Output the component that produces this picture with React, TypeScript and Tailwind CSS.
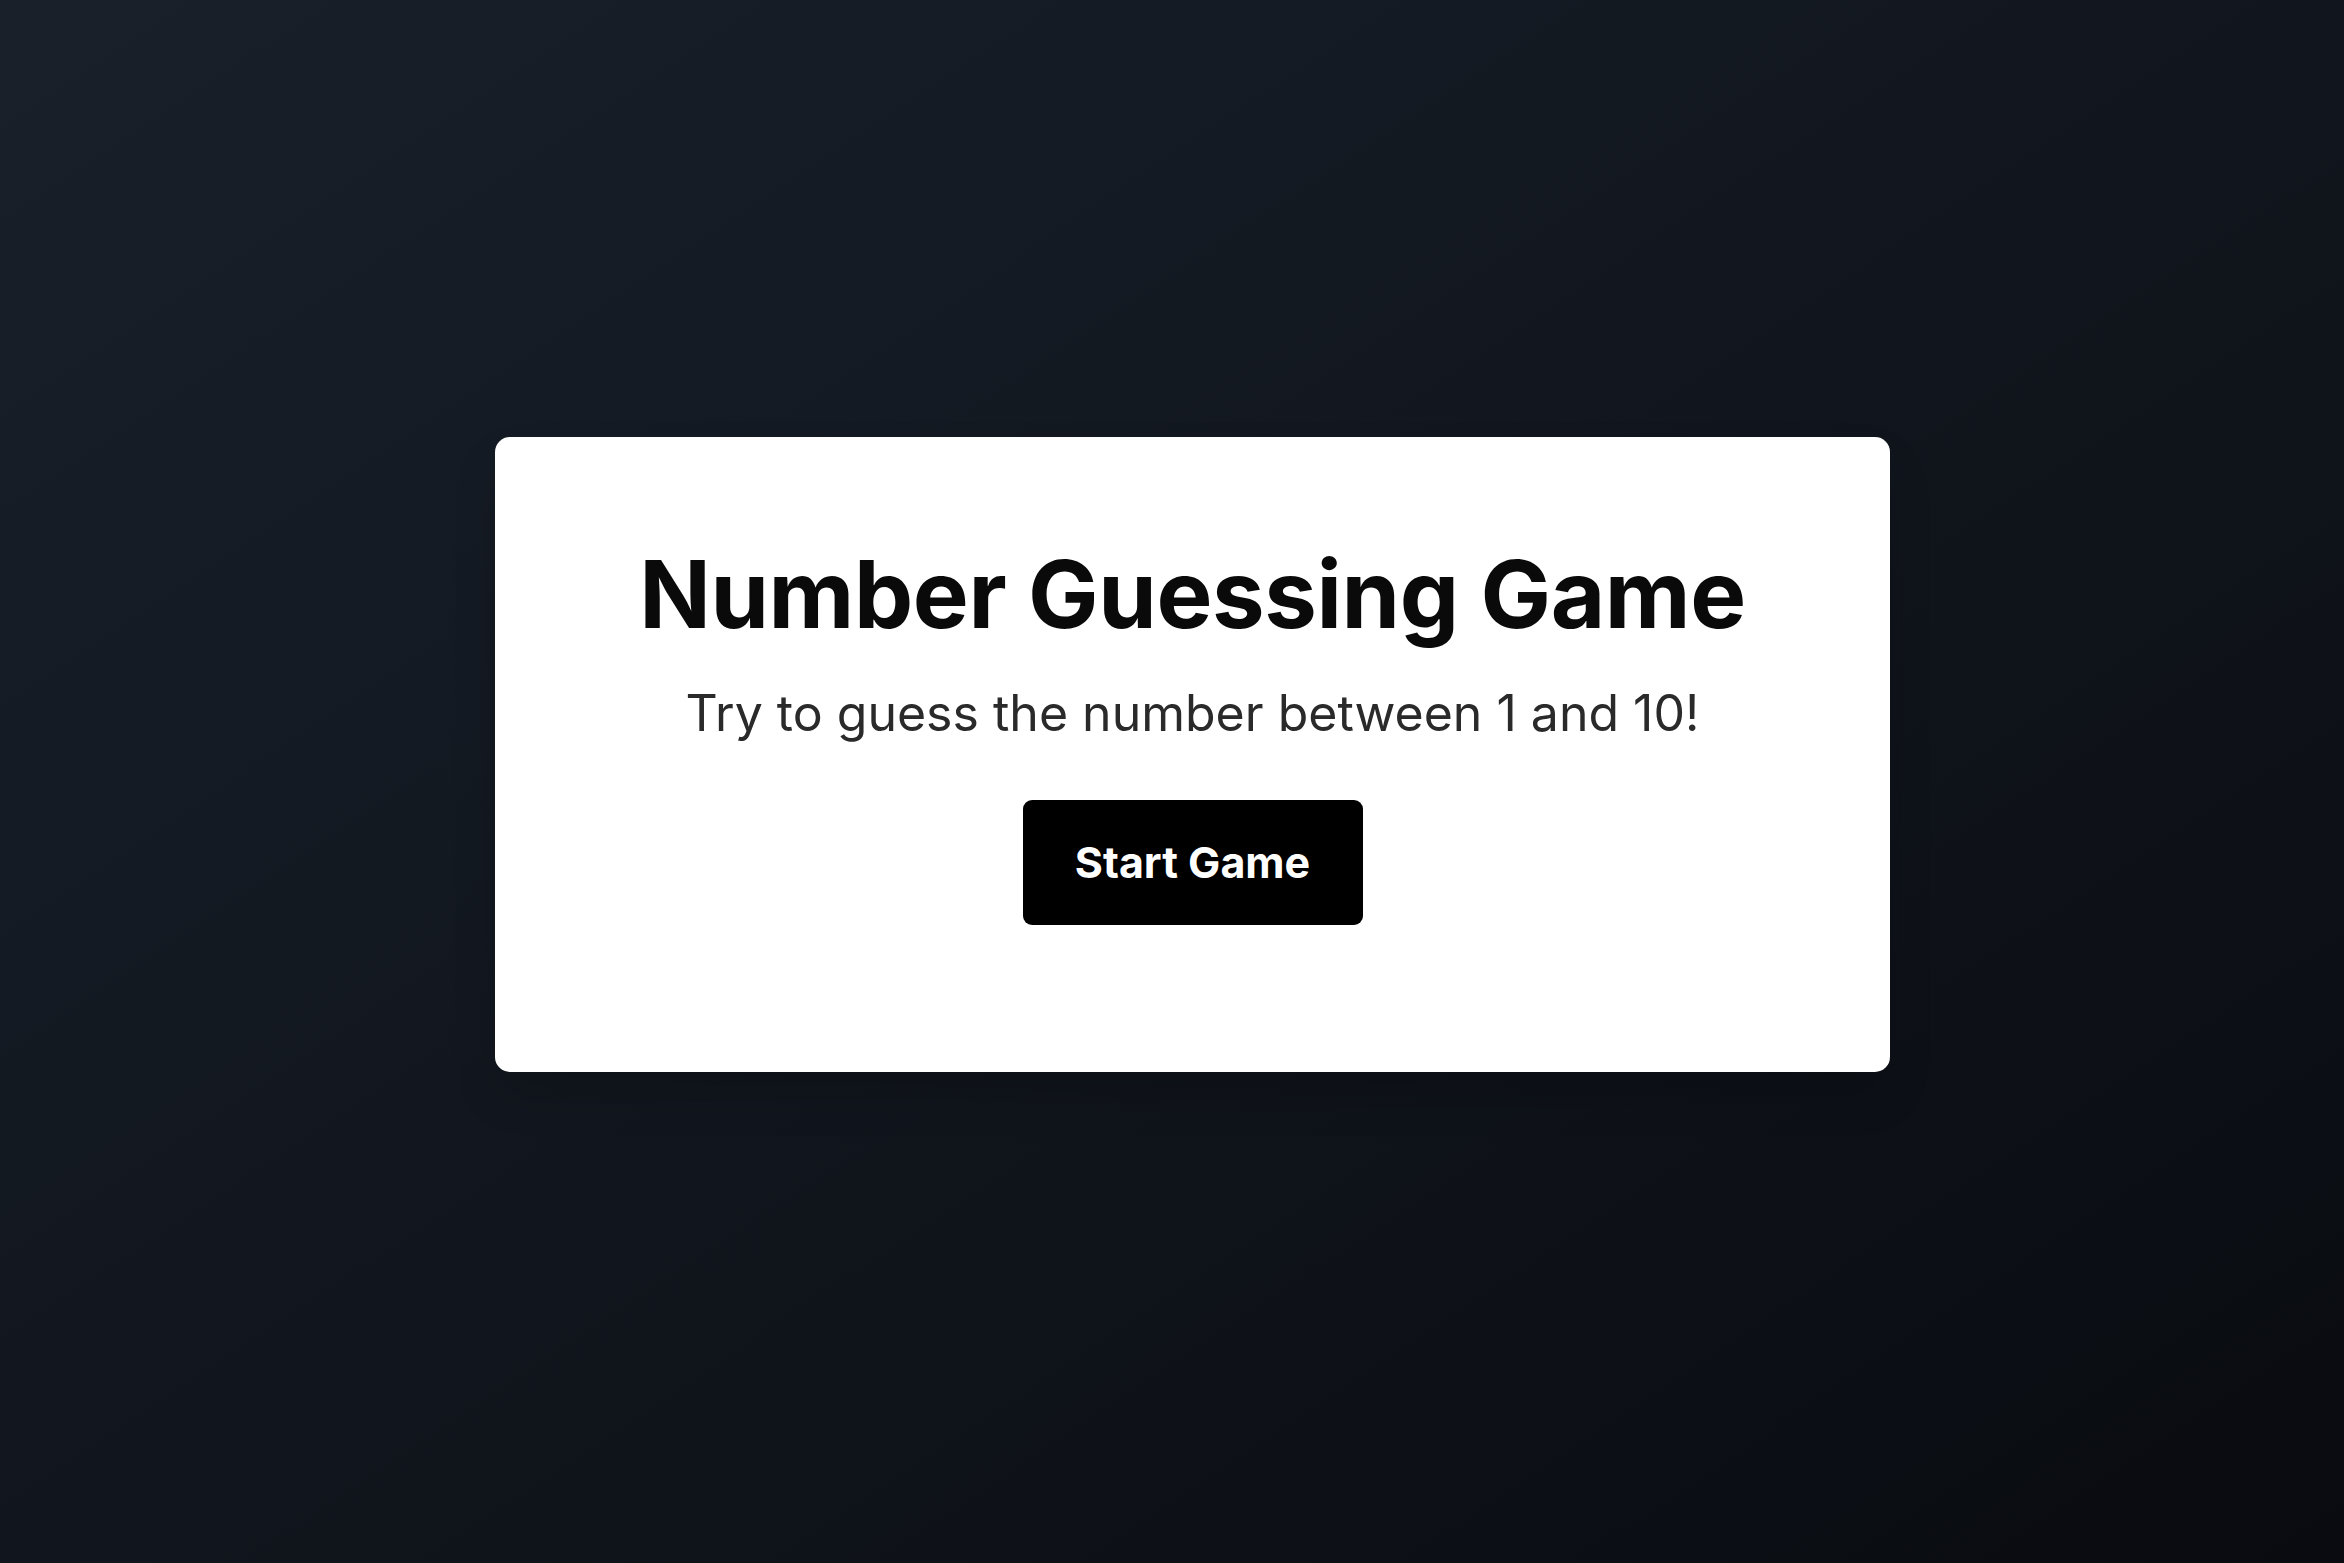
import React from "react";

export default function App() {
  return (
    <div
      className="h-screen w-full flex items-center justify-center pl-[41px] pb-[54px] bg-gradient-to-br from-[#19202a] via-[#11161e] to-[#090b10]"
      style={{ fontFamily: "Inter, 'Noto Sans', sans-serif" }}
    >
      <div className="w-[1395px] h-[635px] bg-white rounded-[15px] shadow-2xl flex flex-col items-center pt-[110px]">
        <h1 className="text-[94px] leading-[94px] font-bold text-[#0a0a0a] tracking-[-0.4px]">
          Number Guessing Game
        </h1>
        <p className="mt-[47px] text-[50px] leading-[51px] text-[#2a2a2a]">
          Try to guess the number between 1 and 10!
        </p>
        <button className="mt-[61px] w-[340px] h-[125px] bg-black rounded-[9px] text-white text-[43px] font-bold">
          Start Game
        </button>
      </div>
    </div>
  );
}
